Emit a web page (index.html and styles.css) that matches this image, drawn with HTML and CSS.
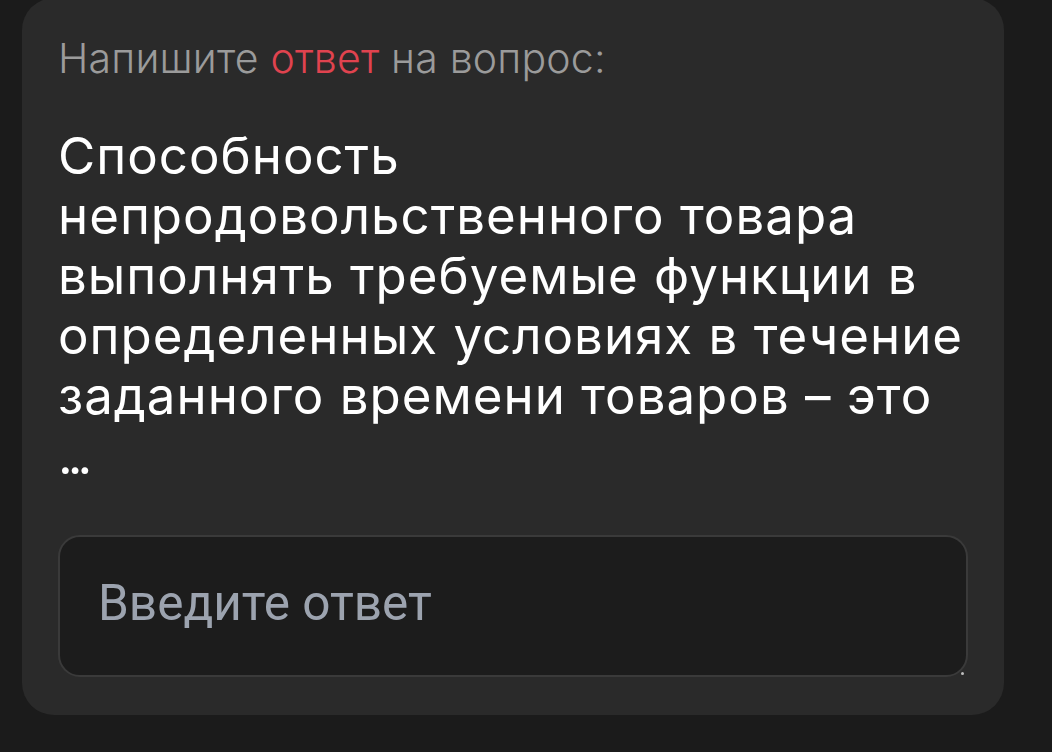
FILE: index.html
```html
<!DOCTYPE html>
<html lang="ru">
<head>
<meta charset="utf-8">
<title>Вопрос</title>
<link rel="stylesheet" href="styles.css">
</head>
<body>
<main class="card">
  <p class="prompt">Напишите <span class="accent">ответ</span> на вопрос:</p>
  <h1 class="question">Способность непродовольственного товара выполнять требуемые функции в определенных условиях в течение заданного времени товаров – это <span class="dots">...</span></h1>
  <div class="answer">
    <textarea class="answer-input" placeholder="Введите ответ"></textarea>
  </div>
</main>
</body>
</html>
```

FILE: styles.css
```css
html, body {
  margin: 0;
  padding: 0;
  background: #1b1b1b;
  height: 100%;
  overflow: hidden;
}

.card {
  box-sizing: border-box;
  width: 982px;
  margin: -2px 0 0 22px;
  padding: 36px 36px 38px 36px;
  background: #2a2a2a;
  border-radius: 32px;
}

.prompt {
  margin: 0;
  font-family: "Inter", "Noto Sans", sans-serif;
  font-weight: 300;
  font-size: 41px;
  line-height: 48px;
  letter-spacing: 0.2px;
  color: #9b9b9b;
}

.accent {
  color: #e0434f;
}

.question {
  margin: 44px 0 0 0;
  font-family: "Inter", "Noto Sans", sans-serif;
  font-weight: 400;
  font-size: 51px;
  line-height: 60px;
  letter-spacing: 1px;
  color: #ffffff;
}

.dots {
  letter-spacing: -5px;
}

.answer {
  position: relative;
  margin-top: 49px;
}

.answer::after {
  content: "";
  position: absolute;
  right: 4px;
  bottom: 2px;
  width: 3px;
  height: 3px;
  border-radius: 50%;
  background: #bdbdbd;
}

.answer-input {
  display: block;
  box-sizing: border-box;
  width: 100%;
  height: 142px;
  margin: 0;
  padding: 37px 38px;
  background: #1c1c1c;
  border: 2px solid #3a3a3a;
  border-radius: 22px;
  resize: none;
  outline: none;
  font-family: "Roboto", "Noto Sans", sans-serif;
  font-size: 49.5px;
  line-height: 58px;
  color: #ffffff;
}

.answer-input::placeholder {
  color: #9ca3af;
}
```
